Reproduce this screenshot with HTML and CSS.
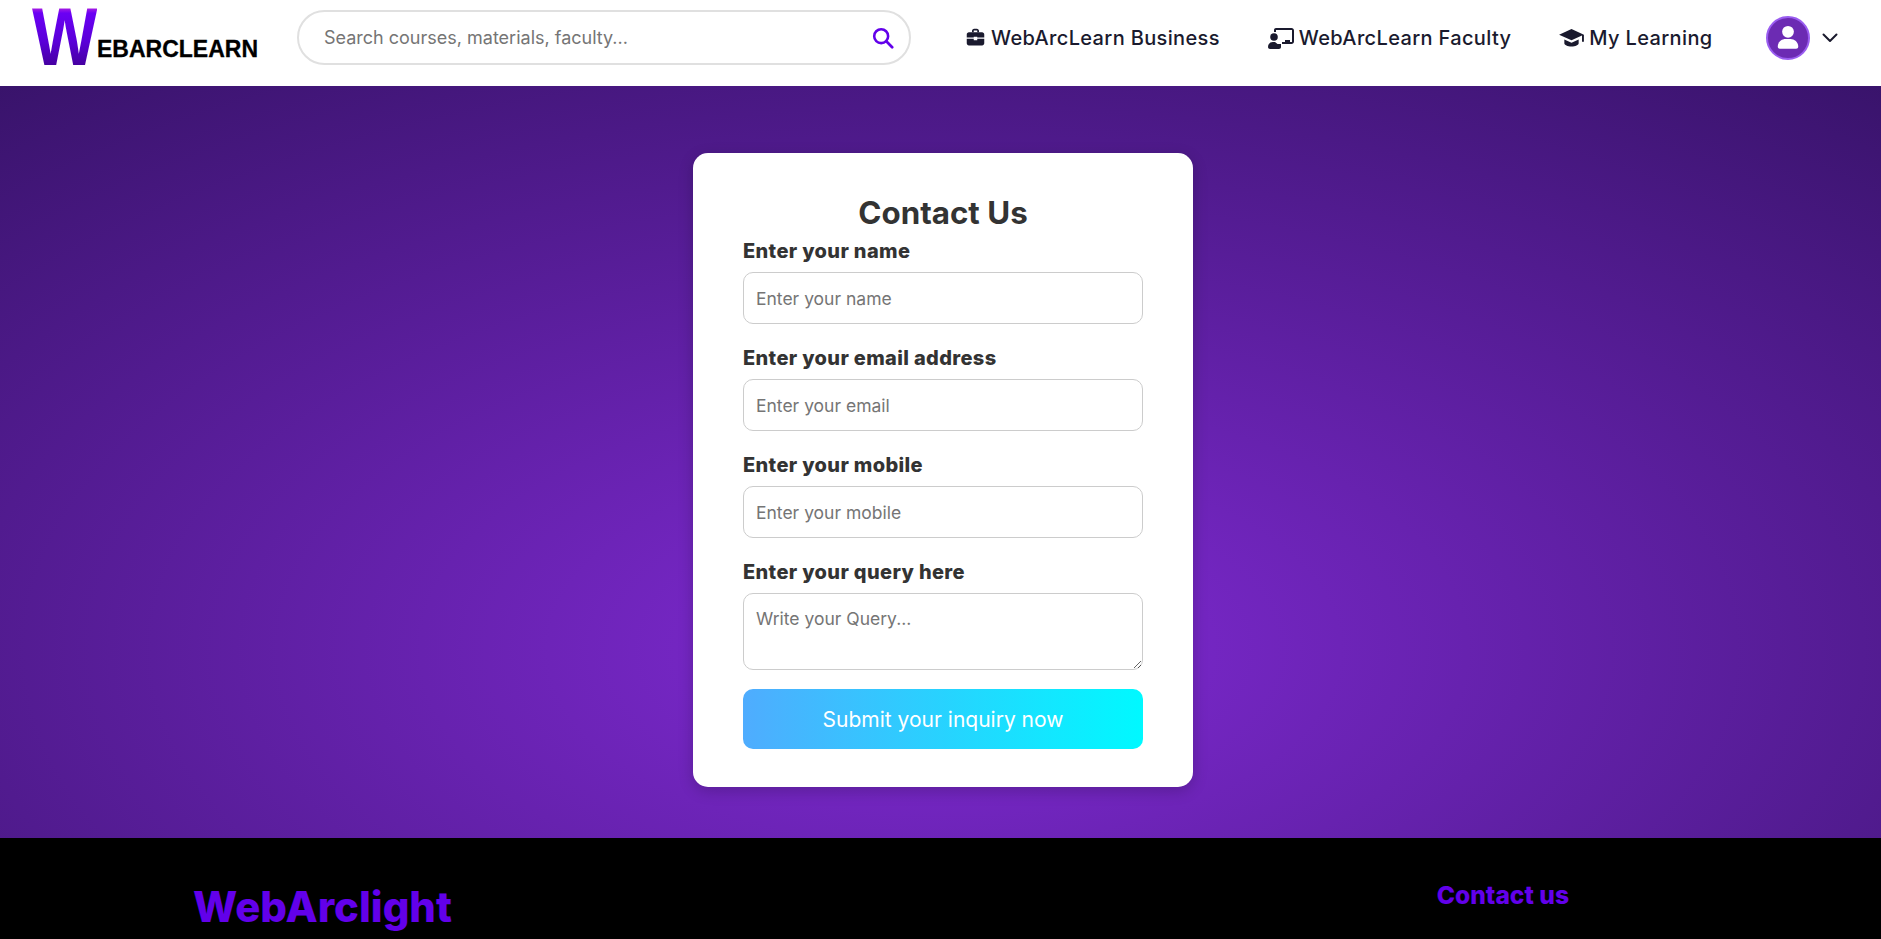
FILE: index.html
```html
<!DOCTYPE html>
<html lang="en">
<head>
  <meta charset="UTF-8" />
  <title>Contact Us - WebArcLearn</title>
  <link rel="stylesheet" href="styles.css">
</head>
<body>

  <!-- Top bar -->
  <header class="topbar">
    <a class="logo" href="#"><span class="logo-w">W</span><span class="logo-rest">EBARCLEARN</span></a>

    <div class="search">
      <input type="text" placeholder="Search courses, materials, faculty..." />
      <svg class="search-icon" viewBox="0 0 24 24" width="22" height="22"><circle cx="10" cy="10" r="7.6" fill="none" stroke="currentColor" stroke-width="2.8"/><path d="M15.6 15.6 22 22" stroke="currentColor" stroke-width="3" stroke-linecap="round"/></svg>
    </div>

    <nav class="nav">
      <a href="#">
        <svg viewBox="0 0 24 24" width="21" height="21"><path d="M8 4.500C8 3.100 9.100 2 10.500 2h3C14.900 2 16 3.100 16 4.500V6h-2V4h-4v2H8z"/><path d="M2 8.500C2 7.100 3.100 6 4.500 6h15C20.900 6 22 7.100 22 8.500V12h-8v-1h-4v1H2z"/><path d="M2 13.500h8V15h4v-1.500h8v5c0 1.400-1.100 2.500-2.500 2.500h-15C3.100 21 2 19.900 2 18.500z"/></svg>
        WebArcLearn Business
      </a>
      <a href="#">
        <svg viewBox="0 0 26 22" width="26" height="22"><path d="M8 1h15.500C24.900 1 26 2.100 26 3.500v11c0 1.400-1.100 2.500-2.500 2.500H14v-2h3v-2h5v2h2V3H8v2H6V3c0-1.100.9-2 2-2z"/><circle cx="6" cy="10" r="3.800"/><path d="M0 20c0-3 2.300-5 5-5h2l2.500 2H13v3c0 1.100-.9 2-2 2H2c-1.100 0-2-.9-2-2z"/></svg>
        WebArcLearn Faculty
      </a>
      <a href="#">
        <svg viewBox="0 0 26 22" width="25" height="21"><path d="M13 2 0 8l13 6 11-5v6.500h2V8z"/><path d="M5.500 13v4c0 1.800 3.400 3.500 7.500 3.500s7.500-1.700 7.500-3.500v-4L13 16.400z"/></svg>
        My Learning
      </a>
    </nav>

    <div class="account">
      <div class="avatar">
        <svg viewBox="0 0 24 24" width="30" height="30"><circle cx="12" cy="7" r="4.700" fill="#fff"/><path d="M3.800 19c0-3.900 3.100-6.200 6.200-6.200h4c3.100 0 6.200 2.300 6.200 6.200 0 1-.8 1.500-1.700 1.500h-13c-.9 0-1.700-.5-1.700-1.500z" fill="#fff"/></svg>
      </div>
      <svg class="chevron" viewBox="0 0 16 10" width="16" height="10"><path d="M1.500 1.500 8 8l6.500-6.500" fill="none" stroke="currentColor" stroke-width="2" stroke-linecap="round" stroke-linejoin="round"/></svg>
    </div>
  </header>

  <!-- Contact form -->
  <main class="hero">
    <form class="card">
      <h2>Contact Us</h2>

      <div class="field">
        <label>Enter your name</label>
        <input type="text" placeholder="Enter your name" />
      </div>
      <div class="field">
        <label>Enter your email address</label>
        <input type="email" placeholder="Enter your email" />
      </div>
      <div class="field">
        <label>Enter your mobile</label>
        <input type="text" placeholder="Enter your mobile" />
      </div>
      <div class="field last">
        <label>Enter your query here</label>
        <textarea placeholder="Write your Query..."></textarea>
      </div>

      <button type="button">Submit your inquiry now</button>
    </form>
  </main>

  <footer class="footer">
    <div class="brand">WebArclight</div>
    <div class="footer-title">Contact us</div>
  </footer>

</body>
</html>
```

FILE: styles.css
```css
* {
  box-sizing: border-box;
}

html, body {
  height: 939px;
  overflow: hidden;
}

body {
  font-family: 'Inter', 'Noto Sans', sans-serif;
  margin: 0;
  background-color: #000;
}

a {
  color: inherit;
  text-decoration: none;
}

/* top bar */
.topbar {
  height: 86px;
  background-color: #fff;
  display: flex;
  align-items: center;
  padding: 0 0 11px 32px;
  color: #1a1a2e;
}

.logo {
  width: 265px;
  height: 58px;
  display: flex;
  align-items: flex-end;
  flex-shrink: 0;
  font-family: 'Liberation Sans', sans-serif;
  font-weight: bold;
}

.logo-w {
  font-size: 81px;
  line-height: 81px;
  height: 81px;
  width: 76px;
  margin: -11.500px -11px -11.500px 0;
  display: inline-block;
  transform: scaleX(0.855);
  transform-origin: left center;
  background: linear-gradient(180deg, #b020e0 13%, #6a00f4 20%, #5a00d8 55%, #45009f 85%);
  -webkit-background-clip: text;
  background-clip: text;
  color: transparent;
}

.logo-rest {
  font-size: 23px;
  line-height: 20px;
  color: #000;
  margin-bottom: 8px;
  -webkit-text-stroke: 0.3px #000;
}

.search {
  width: 614px;
  height: 55px;
  border: 2px solid #e0e0e0;
  border-radius: 28px;
  display: flex;
  align-items: center;
  padding: 0 15px 0 25px;
  flex-shrink: 0;
}

.search input {
  flex: 1;
  border: none;
  outline: none;
  font-family: inherit;
  font-size: 18px;
  padding: 0;
}

.search input::placeholder {
  color: #757575;
}

.search-icon {
  color: #6200ea;
}

.nav {
  display: flex;
  align-items: center;
  gap: 48px;
  margin-left: 54px;
}

.nav a {
  display: flex;
  align-items: center;
  gap: 5px;
  font-size: 20px;
  font-weight: 500;
  letter-spacing: 0.35px;
  white-space: nowrap;
}

.nav svg {
  fill: #1a1a2e;
}

.account {
  display: flex;
  align-items: center;
  gap: 12px;
  margin-left: 53px;
}

.avatar {
  width: 44px;
  height: 44px;
  border-radius: 50%;
  background-color: #6c2bb3;
  border: 2px solid #9a5df0;
  display: flex;
  align-items: center;
  justify-content: center;
}

.chevron {
  color: #1a1a2e;
}

/* contact form */
.hero {
  height: 752px;
  padding: 67px 0 51px 5px;
  background: radial-gradient(ellipse 1500px 740px at 50.200% 75%, #802ad4 0%, #38136a 100%);
  display: flex;
  justify-content: center;
  align-items: flex-start;
}

.card {
  width: 500px;
  height: 634px;
  background-color: #fff;
  border-radius: 15px;
  padding: 39px 50px 38px;
  box-shadow: 0 4px 15px rgba(0,0,0,0.2);
}

.card h2 {
  margin: 0 0 5px;
  padding-top: 1px;
  text-align: center;
  font-size: 31.300px;
  line-height: 40px;
  font-weight: 700;
  color: #333;
}

.field {
  margin-bottom: 21px;
}

.field.last {
  margin-bottom: 19px;
}

.field label {
  display: block;
  font-size: 20px;
  line-height: 26px;
  letter-spacing: 0.35px;
  font-weight: 800;
  color: #333;
  margin-bottom: 8px;
}

.field input, .field textarea {
  display: block;
  width: 100%;
  height: 52px;
  padding: 0 12px;
  border: 1px solid #ccc;
  border-radius: 10px;
  font-family: inherit;
  font-size: 17.500px;
  outline: none;
}

.field textarea {
  height: 77px;
  padding-top: 13px;
  line-height: 24px;
}

.field input::placeholder, .field textarea::placeholder {
  color: #757575;
}

.card button {
  display: block;
  width: 100%;
  height: 60px;
  border: none;
  border-radius: 10px;
  background: linear-gradient(90deg, #4facfe, #00f9ff);
  color: #fff;
  font-family: inherit;
  font-size: 21px;
  cursor: pointer;
}

/* footer */
.footer {
  height: 101px;
  background-color: #000;
  color: #6200ea;
  display: flex;
  justify-content: space-between;
  font-weight: 800;
  padding: 0 312px 0 193px;
}

.brand {
  font-size: 41.800px;
  line-height: 48px;
  margin-top: 45px;
}

.footer-title {
  font-size: 24.600px;
  line-height: 30px;
  margin-top: 42px;
}
```
